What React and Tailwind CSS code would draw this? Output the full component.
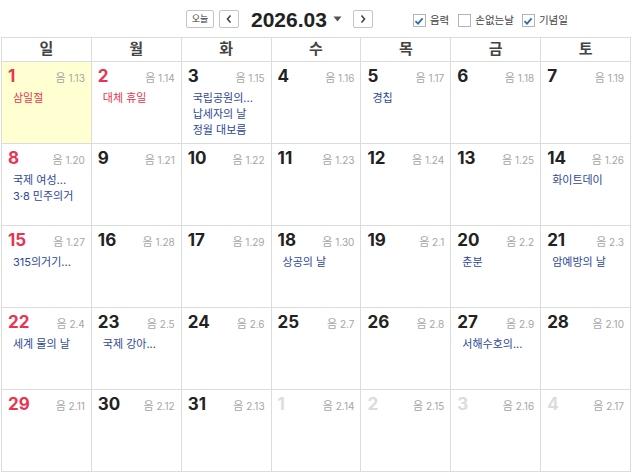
import React from 'react'

const weekdays = ['일', '월', '화', '수', '목', '금', '토']

const days = [
  { d: 1, l: '1.13', red: true, today: true, ev: [{ t: '삼일절', red: true }] },
  { d: 2, l: '1.14', red: true, ev: [{ t: '대체 휴일', red: true }] },
  { d: 3, l: '1.15', ev: [{ t: '국립공원의...' }, { t: '납세자의 날' }, { t: '정월 대보름' }] },
  { d: 4, l: '1.16' },
  { d: 5, l: '1.17', ev: [{ t: '경칩' }] },
  { d: 6, l: '1.18' },
  { d: 7, l: '1.19' },
  { d: 8, l: '1.20', red: true, ev: [{ t: '국제 여성...' }, { t: '3·8 민주의거' }] },
  { d: 9, l: '1.21' },
  { d: 10, l: '1.22' },
  { d: 11, l: '1.23' },
  { d: 12, l: '1.24' },
  { d: 13, l: '1.25' },
  { d: 14, l: '1.26', ev: [{ t: '화이트데이' }] },
  { d: 15, l: '1.27', red: true, ev: [{ t: '315의거기...' }] },
  { d: 16, l: '1.28' },
  { d: 17, l: '1.29' },
  { d: 18, l: '1.30', ev: [{ t: '상공의 날' }] },
  { d: 19, l: '2.1' },
  { d: 20, l: '2.2', ev: [{ t: '춘분' }] },
  { d: 21, l: '2.3', ev: [{ t: '암예방의 날' }] },
  { d: 22, l: '2.4', red: true, ev: [{ t: '세계 물의 날' }] },
  { d: 23, l: '2.5', ev: [{ t: '국제 강아...' }] },
  { d: 24, l: '2.6' },
  { d: 25, l: '2.7' },
  { d: 26, l: '2.8' },
  { d: 27, l: '2.9', ev: [{ t: '서해수호의...' }] },
  { d: 28, l: '2.10' },
  { d: 29, l: '2.11', red: true },
  { d: 30, l: '2.12' },
  { d: 31, l: '2.13' },
  { d: 1, l: '2.14', other: true },
  { d: 2, l: '2.15', other: true },
  { d: 3, l: '2.16', other: true },
  { d: 4, l: '2.17', other: true },
]

const Check = ({ checked }) => (
  <span className="w-[13px] h-[13px] border border-[#b5b5b5] bg-white flex items-center justify-center">
    {checked && (
      <svg width="10" height="10" viewBox="0 0 10 10">
        <path d="M1.5 5.2 L4 7.6 L8.6 2.4" fill="none" stroke="#2f6fa8" strokeWidth="1.8" />
      </svg>
    )}
  </span>
)

const App = () => {
  return (
    <div
      className="w-[632px] h-[474px] bg-white text-[#222] overflow-hidden"
      style={{ fontFamily: 'Inter, "Noto Sans CJK KR", sans-serif' }}
    >
      <div className="h-[37px] flex items-center">
        <div className="flex items-center ml-[186px] mt-px">
          <button className="w-[28px] h-[18px] border border-[#c4c4c4] rounded-[2px] text-[9px] text-[#333] flex items-center justify-center bg-white">
            오늘
          </button>
          <button className="ml-[5px] w-[20px] h-[18px] border border-[#c4c4c4] rounded-[2px] flex items-center justify-center bg-white">
            <svg width="8" height="10" viewBox="0 0 8 10">
              <path d="M5.5 1.5 L2.5 5 L5.5 8.5" fill="none" stroke="#444" strokeWidth="1.6" />
            </svg>
          </button>
          <span
            className="ml-[12px] text-[21px] font-bold text-[#222] leading-none"
            style={{ fontFamily: '"Liberation Sans", sans-serif' }}
          >
            2026.03
          </span>
          <svg className="ml-[6px]" width="9" height="6" viewBox="0 0 9 6">
            <path d="M0.5 0.5 L8.5 0.5 L4.5 5.5 Z" fill="#555" />
          </svg>
          <button className="ml-[11px] w-[20px] h-[18px] border border-[#c4c4c4] rounded-[2px] flex items-center justify-center bg-white">
            <svg width="8" height="10" viewBox="0 0 8 10">
              <path d="M2.5 1.5 L5.5 5 L2.5 8.5" fill="none" stroke="#444" strokeWidth="1.6" />
            </svg>
          </button>
        </div>
        <div className="flex items-center ml-[40px] mt-[4px] text-[10.5px] text-[#444]">
          <Check checked />
          <span className="ml-[4px]">음력</span>
          <span className="ml-[9px]"><Check /></span>
          <span className="ml-[4px]">손없는날</span>
          <span className="ml-[8px]"><Check checked /></span>
          <span className="ml-[4px]">기념일</span>
        </div>
      </div>

      <div className="ml-px w-[630px] border-t border-l border-[#dcdcdc] grid grid-cols-7">
        {weekdays.map((w) => (
          <div
            key={w}
            className="h-[24px] border-r border-b border-[#dcdcdc] flex items-center justify-center text-[15px] font-bold text-[#444]"
          >
            {w}
          </div>
        ))}
        {days.map((c, i) => (
          <div
            key={i}
            className={
              'h-[82px] border-r border-b border-[#dcdcdc] pl-[6px] pr-[6px] pt-[3px] ' +
              (c.today ? 'bg-[#ffffd2]' : 'bg-white')
            }
          >
            <div className="flex items-baseline justify-between">
              <span
                className={
                  'text-[17px] font-bold leading-[22px] ' +
                  (c.other ? 'text-[#dcdcdc]' : c.red ? 'text-[#ea3350]' : 'text-[#222]')
                }
              >
                {c.d}
              </span>
              <span className="text-[10px] text-[#a5a5a5]">
                <span className="text-[11px]">음</span> {c.l}
              </span>
            </div>
            <div className="pl-[5px] pt-[3px]">
              {(c.ev || []).map((e, j) => (
                <div
                  key={j}
                  className={'text-[11px] leading-[16px] ' + (e.red ? 'text-[#ea3350]' : 'text-[#2d4797]')}
                >
                  {e.t}
                </div>
              ))}
            </div>
          </div>
        ))}
      </div>
    </div>
  )
}

export default App
